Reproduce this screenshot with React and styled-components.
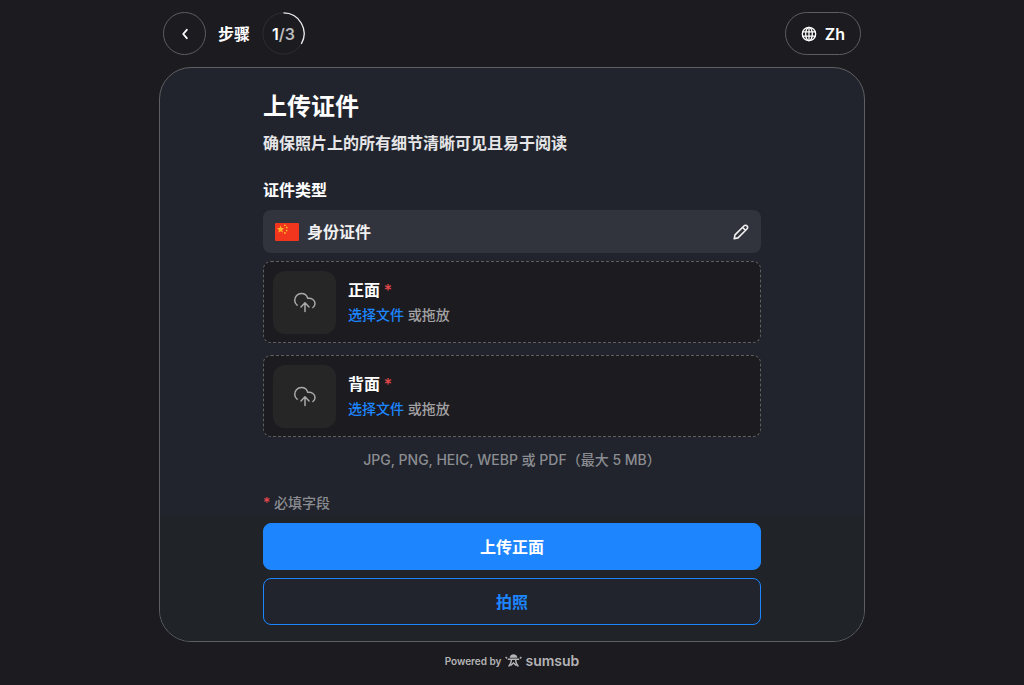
import React, { useRef } from "react";
import styled, { createGlobalStyle } from "styled-components";

const GlobalStyle = createGlobalStyle`
  *, *::before, *::after { box-sizing: border-box; }
  body {
    margin: 0;
    background: #1c1b1f;
    color: #fff;
    font-family: Inter, "Noto Sans CJK SC", sans-serif;
    font-size: 16px;
    line-height: 20px;
  }
  button { font: inherit; cursor: pointer; }
  h1, h2, p { margin: 0; }
`;

const Page = styled.div`
  width: 100%;
  max-width: 706px;
  margin: 0 auto;
  padding-top: 12px;
`;

const Header = styled.header`
  display: flex;
  align-items: center;
  justify-content: space-between;
  padding: 0 4px;
  margin-bottom: 12px;
`;

const Steps = styled.div`
  display: flex;
  align-items: center;
  gap: 12px;
  font-weight: 600;
`;

const PillButton = styled.button`
  display: flex;
  align-items: center;
  justify-content: center;
  gap: 8px;
  min-width: 43px;
  height: 43px;
  padding: 0 ${(p) => (p.$wide ? 15 : 0)}px;
  border: 1px solid #5e5d61;
  border-radius: 22px;
  background: transparent;
  color: #fff;
  font-weight: 600;
`;

const StepRing = styled.div`
  display: grid;
  place-items: center;
  width: 43px;
  height: 43px;
  > * { grid-area: 1 / 1; }
`;

const StepText = styled.span`
  font-weight: 600;
  span { color: #b9b9bc; }
`;

const Card = styled.main`
  border: 1px solid #5d6063;
  border-radius: 32px;
  background: #21242c;
  overflow: hidden;
`;

const Column = styled.div`
  width: 100%;
  max-width: 498px;
  margin: 0 auto;
`;

const Title = styled.h1`
  padding-top: 25px;
  font-size: 24px;
  line-height: 28px;
  font-weight: 700;
`;

const Subtitle = styled.p`
  margin-top: 12px;
  color: #e6e6e8;
  font-weight: 600;
`;

const SectionTitle = styled.h2`
  margin: 27px 0 10px;
  font-size: 16px;
  line-height: 20px;
  font-weight: 600;
`;

const DocumentType = styled.button`
  display: flex;
  align-items: center;
  gap: 8px;
  width: 100%;
  height: 43px;
  padding: 0 12px;
  border: 0;
  border-radius: 8px;
  background: #31343c;
  color: #f0f0f1;
  font-weight: 600;
  text-align: left;
`;

const Grow = styled.span`
  flex: 1;
`;

const DropZone = styled.section`
  display: flex;
  align-items: center;
  gap: 12px;
  height: 82px;
  margin-top: ${(p) => (p.$first ? 8 : 12)}px;
  padding: 0 9px;
  border: 1px dashed #5f5f62;
  border-radius: 8px;
  background: #1c1b1f;
`;

const UploadTile = styled.div`
  display: grid;
  place-items: center;
  width: 63px;
  height: 63px;
  border-radius: 12px;
  background: #262627;
`;

const SideName = styled.p`
  font-weight: 700;
  margin-bottom: 5px;
`;

const Star = styled.span`
  color: #e5484d;
  font-size: ${(p) => (p.$large ? 16 : 14)}px;
  font-weight: 500;
`;

const Muted = styled.p`
  color: ${(p) => p.$color || "#8b8d92"};
  font-size: 14px;
  font-weight: 500;
`;

const Hint = styled(Muted)`
  margin: 13px 0 23px;
  text-align: center;
`;

const LinkButton = styled.button`
  padding: 0;
  border: 0;
  background: none;
  color: #1d86ff;
`;

const Actions = styled.div`
  margin-top: 2px;
  padding: 8px 0 16px;
  background: #202327;
`;

const ActionButton = styled.button`
  display: block;
  width: 100%;
  height: 47px;
  margin-bottom: ${(p) => (p.$outline ? 0 : 8)}px;
  border: 1px solid #1d86ff;
  border-radius: 8px;
  background: ${(p) => (p.$outline ? "#21242c" : "#1d86ff")};
  color: ${(p) => (p.$outline ? "#1d86ff" : "#fff")};
  font-weight: 600;
`;

const Footer = styled.footer`
  display: flex;
  align-items: center;
  justify-content: center;
  gap: 4px;
  padding: 9px 0;
  color: #b4b4b6;
  font-size: 10px;
  font-weight: 600;
`;

const Brand = styled.a`
  display: flex;
  align-items: center;
  gap: 3px;
  color: inherit;
  font-size: 14px;
  text-decoration: none;
`;

const stroke = {
  fill: "none",
  stroke: "currentColor",
  strokeLinecap: "round",
  strokeLinejoin: "round",
};

const ChevronIcon = () => (
  <svg width="16" height="16" viewBox="0 0 16 16" {...stroke} strokeWidth="1.8" aria-hidden="true">
    <path d="M9.8 3.8 6.2 8l3.6 4.2" />
  </svg>
);

const GlobeIcon = () => (
  <svg width="16" height="16" viewBox="0 0 16 16" {...stroke} strokeWidth="1.3" aria-hidden="true">
    <circle cx="8" cy="8" r="6.7" />
    <ellipse cx="8" cy="8" rx="3.3" ry="6.7" />
    <path d="M1.7 5.8h12.6M1.7 10.2h12.6M8 1.3v13.4" />
  </svg>
);

const ProgressRing = () => (
  <svg width="43" height="43" viewBox="0 0 43 43" fill="none" aria-hidden="true">
    <circle cx="21.5" cy="21.5" r="20.6" stroke="#2f2e32" strokeWidth="1" />
    <path d="M21.5 .9a20.6 20.6 0 0 1 17.84 30.9" stroke="#eee" strokeWidth="1.3" />
  </svg>
);

const FlagIcon = () => (
  <svg width="24" height="18" viewBox="0 0 24 18" aria-hidden="true">
    <rect width="24" height="18" rx="1" fill="#f1361d" />
    <g fill="#ffb72c">
      <path d="m5.6 2.6 1 2.5 2.6.2-2 1.7.7 2.6-2.3-1.4-2.3 1.4.7-2.6-2-1.7 2.6-.2z" />
      <circle cx="9.9" cy="2.3" r=".9" />
      <circle cx="11.7" cy="4.5" r=".9" />
      <circle cx="11.7" cy="7.6" r=".9" />
      <circle cx="9.9" cy="10" r=".9" />
    </g>
  </svg>
);

const PencilIcon = () => (
  <svg width="16" height="16" viewBox="0 0 16 16" {...stroke} strokeWidth="1.6" aria-hidden="true">
    <path d="M1.2 14.8 2 10.9 10.9 2c1-1 2.3-1 3.1-.1.9.9.9 2.1-.1 3.1L5 13.9zM9.8 3.6l2.6 2.6" />
  </svg>
);

const CloudUploadIcon = () => (
  <svg width="24" height="24" viewBox="0 0 24 24" {...stroke} stroke="#a9a9ab" strokeWidth="1.5" aria-hidden="true">
    <path d="M4.1 15.2C2.6 14.1 1.7 12.4 1.7 10.3c0-3.9 3-6.7 6.6-6.7 3.2 0 5.6 1.9 6.4 4.7 4.2-.5 7.3 2 7.3 5.2 0 1.7-.8 3.1-2.1 4" />
    <path d="M12 21.5V13M8 17l4-4.2 4 4.2" />
  </svg>
);

const BrandMark = () => (
  <svg width="17" height="14" viewBox="0 0 17 14" fill="none" stroke="currentColor" strokeWidth="1.5" aria-hidden="true">
    <path d="M5.6 3C6 1.5 7.1.9 8.5.9s2.500.6 2.900 2.100z" fill="currentColor" />
    <path d="M2.8 5.3h11.4M6.6 5.3c-.2 2.900-1.200 5.200-3 7.200M10.400 5.300c.2 2.900 1.200 5.200 3 7.200M5.400 11.600 8.500 9l3.100 2.600" />
    <path d="m.6 3.2 1.5 1.2M16.4 3.2l-1.5 1.2" />
  </svg>
);

function UploadSide({ name, first }) {
  const input = useRef(null);
  return (
    <DropZone $first={first} aria-label={name}>
      <UploadTile><CloudUploadIcon /></UploadTile>
      <div>
        <SideName>{name} <Star $large>*</Star></SideName>
        <Muted $color="#a2a2a4">
          <LinkButton type="button" onClick={() => input.current.click()}>选择文件</LinkButton> 或拖放
        </Muted>
        <input ref={input} type="file" aria-label={name} hidden />
      </div>
    </DropZone>
  );
}

export default function App() {
  return (
    <>
      <GlobalStyle />
      <Page>
        <Header>
          <Steps>
            <PillButton type="button" aria-label="返回"><ChevronIcon /></PillButton>
            步骤
            <StepRing>
              <ProgressRing />
              <StepText>1<span>/3</span></StepText>
            </StepRing>
          </Steps>
          <PillButton type="button" $wide><GlobeIcon />Zh</PillButton>
        </Header>
        <Card>
          <Column>
            <Title>上传证件</Title>
            <Subtitle>确保照片上的所有细节清晰可见且易于阅读</Subtitle>
            <SectionTitle>证件类型</SectionTitle>
            <DocumentType type="button">
              <FlagIcon />
              <Grow>身份证件</Grow>
              <PencilIcon />
            </DocumentType>
            <UploadSide name="正面" first />
            <UploadSide name="背面" />
            <Hint>JPG, PNG, HEIC, WEBP 或 PDF（最大 5 MB）</Hint>
            <Muted><Star>*</Star> 必填字段</Muted>
          </Column>
          <Actions>
            <Column>
              <ActionButton type="button">上传正面</ActionButton>
              <ActionButton type="button" $outline>拍照</ActionButton>
            </Column>
          </Actions>
        </Card>
        <Footer>
          Powered by
          <Brand href="#"><BrandMark />sumsub</Brand>
        </Footer>
      </Page>
    </>
  );
}
